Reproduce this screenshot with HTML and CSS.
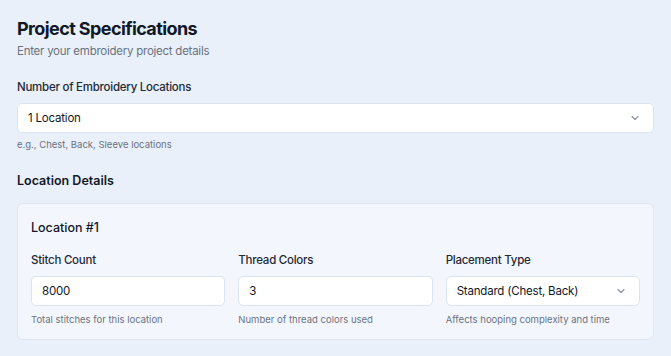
FILE: index.html
```html
<!DOCTYPE html>
<html>
  <head>
    <meta charset="utf-8" />
    <title>Project Specifications</title>
    <link rel="stylesheet" href="styles.css">
  </head>
  <body>
    <div id="specs">
      <h1 class="title">Project Specifications</h1>
      <p class="subtitle">Enter your embroidery project details</p>

      <div class="field">
        <label class="label">Number of Embroidery Locations</label>
        <div class="select">
          <span>1 Location</span>
          <svg class="chevron" width="10" height="10" viewBox="0 0 10 10"><path d="M2 3.5 L5 6.5 L8 3.5" fill="none" stroke="#8a8f98" stroke-width="1.1" stroke-linecap="round" stroke-linejoin="round"/></svg>
        </div>
        <p class="help">e.g., Chest, Back, Sleeve locations</p>
      </div>

      <h2 class="section">Location Details</h2>

      <div class="card">
        <h3 class="card-title">Location #1</h3>
        <div class="grid">
          <div class="col">
            <label class="label">Stitch Count</label>
            <div class="input">8000</div>
            <p class="help">Total stitches for this location</p>
          </div>
          <div class="col">
            <label class="label">Thread Colors</label>
            <div class="input">3</div>
            <p class="help">Number of thread colors used</p>
          </div>
          <div class="col">
            <label class="label">Placement Type</label>
            <div class="select">
              <span>Standard (Chest, Back)</span>
              <svg class="chevron" width="10" height="10" viewBox="0 0 10 10"><path d="M2 3.5 L5 6.5 L8 3.5" fill="none" stroke="#8a8f98" stroke-width="1.1" stroke-linecap="round" stroke-linejoin="round"/></svg>
            </div>
            <p class="help">Affects hooping complexity and time</p>
          </div>
        </div>
      </div>
    </div>
  </body>
</html>
```

FILE: styles.css
```css
/* Project specification form */
body {
  font-family: Inter, "Noto Sans", sans-serif;
  background-color: #e9f0fa;
  color: #111827;
  margin: 0;
  padding: 0;
}
#specs {
  padding: 15px 17px 0 17px;
}
.title {
  font-size: 18px;
  line-height: 28px;
  font-weight: 700;
  letter-spacing: -0.6px;
  margin: 0;
}
.subtitle {
  font-size: 11.5px;
  line-height: 16px;
  letter-spacing: -0.25px;
  color: #6b7280;
  margin: 0 0 20px 0;
}
.field {
  margin-bottom: 20px;
}
.label {
  display: block;
  font-size: 11.5px;
  line-height: 16px;
  font-weight: 500;
  letter-spacing: -0.25px;
  color: #1f2937;
  margin-bottom: 8px;
}
.select, .input {
  height: 30px;
  box-sizing: border-box;
  background-color: #fff;
  border: 1px solid #dde4ee;
  border-radius: 5px;
  display: flex;
  align-items: center;
  justify-content: space-between;
  padding: 0 13px 0 10px;
  font-size: 11.5px;
  letter-spacing: -0.2px;
  color: #111827;
}
.help {
  font-size: 9.5px;
  line-height: 14px;
  color: #6b7280;
  margin: 5px 0 0 0;
}
.section {
  font-size: 12.5px;
  line-height: 18px;
  font-weight: 600;
  margin: 0 0 13px 0;
}
.card {
  background-color: #f3f7fd;
  border: 1px solid #dfe6f0;
  border-radius: 6px;
  padding: 15px 13px 12px 13px;
}
.card-title {
  font-size: 12.5px;
  line-height: 18px;
  font-weight: 500;
  margin: 0 0 15px 0;
}
.grid {
  display: grid;
  grid-template-columns: 1fr 1fr 1fr;
  gap: 13px;
}
.col .help {
  margin-top: 7px;
}
```
